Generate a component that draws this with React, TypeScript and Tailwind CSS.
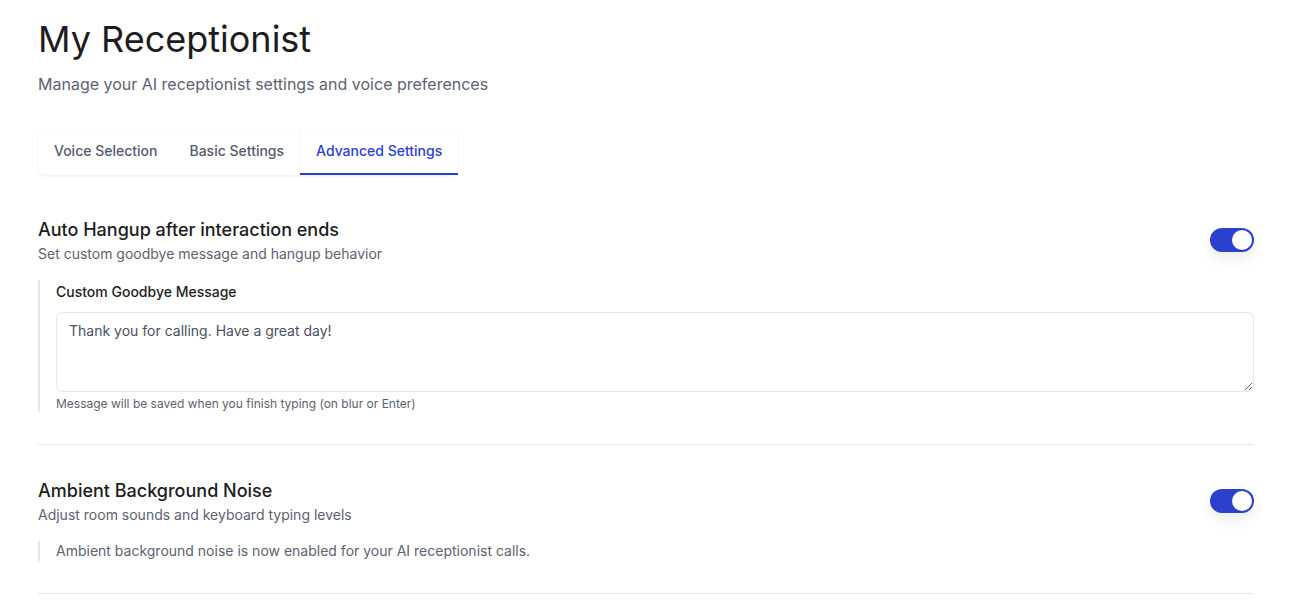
import React, { useState } from 'react';

// Interruptor simple estilo pill
const Toggle = ({ on, onChange }: { on: boolean; onChange: (v: boolean) => void }) => (
  <button
    type="button"
    onClick={() => onChange(!on)}
    className={`relative inline-flex h-6 w-11 shrink-0 items-center rounded-full shadow-[0_6px_14px_rgba(0,0,0,0.08)] transition-colors ${
      on ? 'bg-[#2b40cf]' : 'bg-gray-200'
    }`}
  >
    <span
      className={`inline-block h-5 w-5 rounded-full bg-white transition-transform ${
        on ? 'translate-x-[22px]' : 'translate-x-0.5'
      }`}
    />
  </button>
);

const tabs = ['Voice Selection', 'Basic Settings', 'Advanced Settings'];

export default function App() {
  const [activeTab, setActiveTab] = useState('Advanced Settings');
  const [autoHangup, setAutoHangup] = useState(true);
  const [ambient, setAmbient] = useState(true);
  const [message, setMessage] = useState('Thank you for calling. Have a great day!');

  return (
    <div className="min-h-screen bg-white pl-[38px] pr-[39px] pt-[19px] font-['Inter',sans-serif] text-gray-900">
      <h1 className="text-4xl font-normal leading-10 text-[#1c1d21]">My Receptionist</h1>
      <p className="mt-[13px] text-base text-[#5d6270]">Manage your AI receptionist settings and voice preferences</p>

      {/* tabs */}
      <div className="mt-[33px] inline-flex rounded-lg bg-white shadow-[0_1px_3px_rgba(0,0,0,0.08)]">
        {tabs.map((tab) => {
          const active = tab === activeTab;
          return (
            <button
              key={tab}
              type="button"
              onClick={() => setActiveTab(tab)}
              className={`border-b-2 px-4 py-3 text-sm font-medium leading-5 ${
                active
                  ? 'border-[#2b40cf] text-[#2b40cf] shadow-[-1px_0_0_rgba(0,0,0,0.03)]'
                  : 'border-transparent text-[#555b6a]'
              }`}
            >
              {tab}
            </button>
          );
        })}
      </div>

      {/* auto hangup */}
      <section className="mt-[41px] border-b border-gray-200 pb-8">
        <div className="flex items-center justify-between">
          <div>
            <h2 className="text-lg font-medium leading-7 text-[#1c1d21]">Auto Hangup after interaction ends</h2>
            <p className="text-sm leading-5 text-[#5d6270]">Set custom goodbye message and hangup behavior</p>
          </div>
          <Toggle on={autoHangup} onChange={setAutoHangup} />
        </div>

        {autoHangup && (
          <div className="mt-4 border-l-2 border-gray-200 pl-4 pt-0.5">
            <label className="mb-[10px] block text-sm font-medium leading-5 text-[#1c1d21]">Custom Goodbye Message</label>
            <textarea
              value={message}
              onChange={(e) => setMessage(e.target.value)}
              className="block h-20 w-full resize-y rounded-md border border-gray-200 px-3 py-2 text-sm leading-5 text-[#4b5060] outline-none"
            />
            <p className="mt-1 text-xs leading-4 text-[#5d6270]">Message will be saved when you finish typing (on blur or Enter)</p>
          </div>
        )}
      </section>

      {/* ambient noise */}
      <section className="border-b border-gray-200 pb-8 pt-8">
        <div className="flex items-center justify-between">
          <div>
            <h2 className="text-lg font-medium leading-7 text-[#1c1d21]">Ambient Background Noise</h2>
            <p className="text-sm leading-5 text-[#5d6270]">Adjust room sounds and keyboard typing levels</p>
          </div>
          <Toggle on={ambient} onChange={setAmbient} />
        </div>

        {ambient && (
          <div className="mt-4 border-l-2 border-gray-200 pl-4">
            <p className="text-sm leading-5 text-[#5d6270]">Ambient background noise is now enabled for your AI receptionist calls.</p>
          </div>
        )}
      </section>
    </div>
  );
}
